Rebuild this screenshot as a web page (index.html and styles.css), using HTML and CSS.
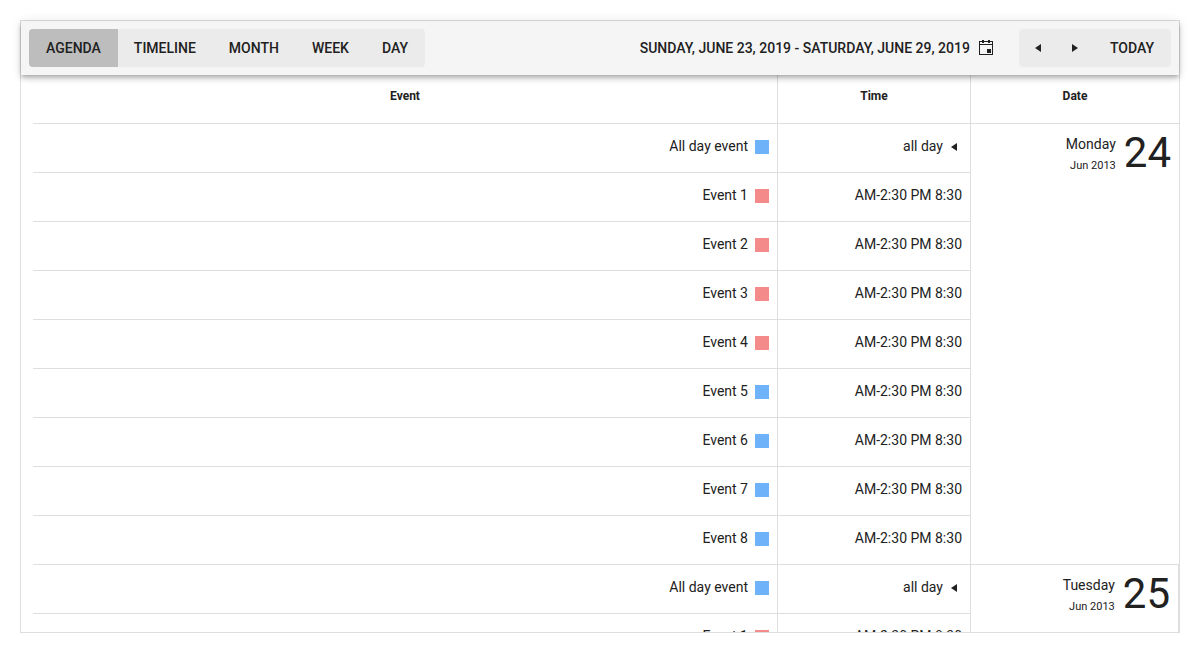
FILE: index.html
```
<!DOCTYPE html>
<html lang="en">
<head>
<meta charset="utf-8">
<title>Scheduler</title>
<link rel="stylesheet" href="styles.css">
</head>
<body>
<main class="scheduler">
  <header class="toolbar">
    <div class="button-group">
      <button type="button" class="button selected">Agenda</button>
      <button type="button" class="button">Timeline</button>
      <button type="button" class="button">Month</button>
      <button type="button" class="button">Week</button>
      <button type="button" class="button">Day</button>
    </div>
    <button type="button" class="range">
      <span>Sunday, June 23, 2019 - Saturday, June 29, 2019</span>
      <svg class="calendar" viewBox="0 0 16 16" aria-hidden="true"><path fill-rule="evenodd" d="M1 1h3V0h2v1h4V0h2v1h3v14H1zM2 2v2h12V2h-2v1h-2V2H6v1H4V2zM2 5v9h12V5zM9 9h4v4H9z"/></svg>
    </button>
    <div class="button-group">
      <button type="button" class="button icon-button" aria-label="Previous"><svg class="arrow" viewBox="0 0 6 8"><path d="M6 0v8L0 4z"/></svg></button>
      <button type="button" class="button icon-button" aria-label="Next"><svg class="arrow" viewBox="0 0 6 8"><path d="M0 0v8l6-4z"/></svg></button>
      <button type="button" class="button">Today</button>
    </div>
  </header>
  <div class="content">
    <table class="agenda">
      <colgroup><col><col class="time-column"><col class="date-column"></colgroup>
      <thead>
        <tr><th scope="col">Event</th><th scope="col">Time</th><th scope="col">Date</th></tr>
      </thead>
      <tbody>
        <tr>
          <td><div class="line">All day event<span class="mark blue"></span></div></td>
          <td><div class="line">all day<svg class="arrow all-day" viewBox="0 0 6 8"><path d="M6 0v8L0 4z"/></svg></div></td>
          <td class="date" rowspan="9"><div class="date-box"><div class="date-text"><div class="weekday">Monday</div><div class="month">Jun 2013</div></div><strong class="day">24</strong></div></td>
        </tr>
        <tr><td><div class="line">Event 1<span class="mark red"></span></div></td><td><div class="line">AM-2:30 PM 8:30</div></td></tr>
        <tr><td><div class="line">Event 2<span class="mark red"></span></div></td><td><div class="line">AM-2:30 PM 8:30</div></td></tr>
        <tr><td><div class="line">Event 3<span class="mark red"></span></div></td><td><div class="line">AM-2:30 PM 8:30</div></td></tr>
        <tr><td><div class="line">Event 4<span class="mark red"></span></div></td><td><div class="line">AM-2:30 PM 8:30</div></td></tr>
        <tr><td><div class="line">Event 5<span class="mark blue"></span></div></td><td><div class="line">AM-2:30 PM 8:30</div></td></tr>
        <tr><td><div class="line">Event 6<span class="mark blue"></span></div></td><td><div class="line">AM-2:30 PM 8:30</div></td></tr>
        <tr><td><div class="line">Event 7<span class="mark blue"></span></div></td><td><div class="line">AM-2:30 PM 8:30</div></td></tr>
        <tr><td><div class="line">Event 8<span class="mark blue"></span></div></td><td><div class="line">AM-2:30 PM 8:30</div></td></tr>
        <tr>
          <td><div class="line">All day event<span class="mark blue"></span></div></td>
          <td><div class="line">all day<svg class="arrow all-day" viewBox="0 0 6 8"><path d="M6 0v8L0 4z"/></svg></div></td>
          <td class="date edged" rowspan="2"><div class="date-box"><div class="date-text"><div class="weekday">Tuesday</div><div class="month">Jun 2013</div></div><strong class="day">25</strong></div></td>
        </tr>
        <tr><td><div class="line">Event 1<span class="mark red"></span></div></td><td><div class="line">AM-2:30 PM 8:30</div></td></tr>
      </tbody>
    </table>
  </div>
</main>
</body>
</html>
```
FILE: styles.css
```
* {
  box-sizing: border-box;
}

body {
  margin: 0;
  padding: 20px;
  background: #fff;
  color: #212121;
  font: 14px/20px Roboto, sans-serif;
}

.scheduler {
  display: flex;
  flex-direction: column;
  height: calc(100vh - 40px);
  border: 1px solid #dedede;
}

.toolbar {
  position: relative;
  z-index: 1;
  display: flex;
  flex: none;
  align-items: center;
  padding: 8px;
  background: #f5f5f5;
  box-shadow: 0 2px 4px -1px rgba(0, 0, 0, .2), 0 4px 5px 0 rgba(0, 0, 0, .14), 0 1px 10px 0 rgba(0, 0, 0, .12);
}

.button-group {
  display: flex;
  overflow: hidden;
  border-radius: 4px;
  background: #ebebeb;
}

.button,
.range {
  height: 38px;
  margin: 0;
  padding: 0 17px;
  border: 0;
  background: none;
  color: inherit;
  font: 500 14px/20px Roboto, sans-serif;
  text-transform: uppercase;
  white-space: nowrap;
  cursor: pointer;
}

.button + .button {
  margin-left: -1px;
}

.selected {
  background: #bdbdbd;
}

.icon-button {
  display: flex;
  align-items: center;
  justify-content: center;
  width: 38px;
  padding: 0;
}

.range {
  display: flex;
  align-items: center;
  gap: 8px;
  margin-left: auto;
  padding: 0 25px 0 8px;
}

.calendar {
  width: 16px;
  height: 16px;
  fill: #212121;
}

.arrow {
  width: 6px;
  height: 8px;
  fill: #212121;
}

.content {
  flex: 1;
  min-height: 0;
  overflow: hidden;
  padding-left: 12px;
}

.agenda {
  width: 100%;
  border-collapse: separate;
  border-spacing: 0;
  table-layout: fixed;
}

.time-column {
  width: 193px;
}

.date-column {
  width: 208px;
}

.agenda th,
.agenda td {
  height: 49px;
  border: solid #dedede;
  border-width: 0 1px 1px 0;
  vertical-align: top;
}

.agenda th {
  padding: 11px 8px 0;
  font-size: 12px;
  font-weight: 700;
}

.agenda td {
  padding: 12px 8px 0;
}

.agenda th:last-child,
.agenda .date {
  border-right-width: 0;
}

.agenda .edged {
  border-right-width: 1px;
}

.line {
  display: flex;
  align-items: center;
  justify-content: flex-end;
}

.mark {
  width: 14px;
  height: 14px;
  margin: 2px 0 0 7px;
}

.blue {
  background: #6eb3fa;
}

.red {
  background: #f58a8a;
}

.all-day {
  margin: 2px 5px 0 8px;
}

.agenda .date {
  padding-top: 8px;
}

.date-box {
  display: flex;
  justify-content: flex-end;
  gap: 8px;
}

.date-text {
  padding-top: 2px;
  text-align: right;
}

.month {
  padding-top: 4px;
  font-size: 11px;
  line-height: 16px;
}

.day {
  font-size: 42px;
  font-weight: 400;
  line-height: 42px;
}
```
